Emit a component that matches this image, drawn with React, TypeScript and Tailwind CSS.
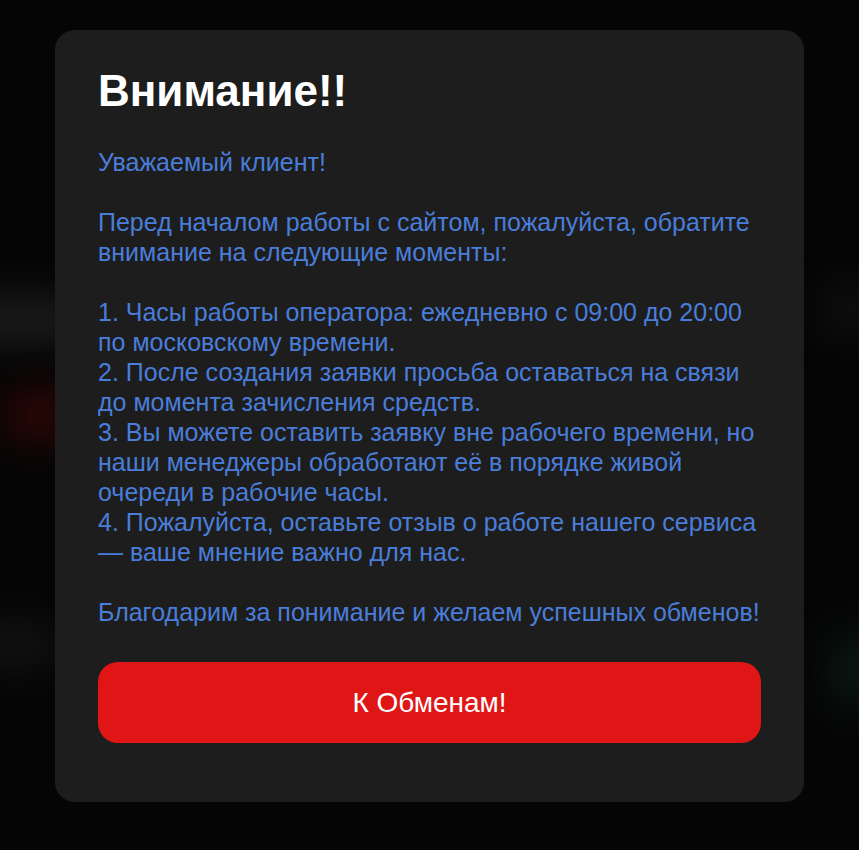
import React from "react";

// each entry is one paragraph; inner arrays are the lines as wrapped in the design
const items: string[][] = [
  ["1. Часы работы оператора: ежедневно с 09:00 до 20:00", "по московскому времени."],
  ["2. После создания заявки просьба оставаться на связи", "до момента зачисления средств."],
  [
    "3. Вы можете оставить заявку вне рабочего времени, но",
    "наши менеджеры обработают её в порядке живой",
    "очереди в рабочие часы.",
  ],
  ["4. Пожалуйста, оставьте отзыв о работе нашего сервиса", "— ваше мнение важно для нас."],
];

function Lines({ lines }: { lines: string[] }) {
  return (
    <p className="whitespace-nowrap">
      {lines.map((l, i) => (
        <React.Fragment key={i}>
          {i > 0 && <br />}
          {l}
        </React.Fragment>
      ))}
    </p>
  );
}

export default function App() {
  return (
    <div className="relative min-h-[850px] w-full overflow-hidden bg-[#050505] font-['Liberation_Sans',Arial,sans-serif]">
      {/* blurred page behind the modal */}
      <div className="pointer-events-none absolute inset-0">
        <div className="absolute left-[-40px] top-[295px] h-[50px] w-[120px] rounded-full bg-[#2a2a2a] opacity-60 blur-[18px]" />
        <div className="absolute left-[0px] top-[388px] h-[55px] w-[80px] rounded-full bg-[#3a0707] opacity-70 blur-[18px]" />
        <div className="absolute left-[-30px] top-[620px] h-[50px] w-[90px] rounded-full bg-[#1a1a1a] opacity-60 blur-[18px]" />
        <div className="absolute right-[-30px] top-[630px] h-[80px] w-[60px] rounded-full bg-[#0f2a22] opacity-50 blur-[20px]" />
        <div className="absolute right-[-20px] top-[280px] h-[60px] w-[60px] rounded-full bg-[#151515] opacity-60 blur-[18px]" />
      </div>

      <div className="relative flex justify-center pt-[30px]">
        <div className="w-[749px] rounded-[20px] bg-[#1d1d1d] px-[43px] pb-[59px] pt-[35px]">
          <h2 className="text-[44px] font-bold leading-[52px] text-white">Внимание!!</h2>

          <div className="mt-[30px] flex flex-col gap-[30px] text-[25px] leading-[30px] text-[#4a7dda]">
            <p>Уважаемый клиент!</p>
            <Lines lines={["Перед началом работы с сайтом, пожалуйста, обратите", "внимание на следующие моменты:"]} />
            <div>
              {items.map((lines, i) => (
                <Lines key={i} lines={lines} />
              ))}
            </div>
            <p className="whitespace-nowrap">Благодарим за понимание и желаем успешных обменов!</p>
          </div>

          <button
            type="button"
            className="mt-[35px] flex h-[81px] w-full items-center justify-center rounded-[20px] bg-[#e01616] text-[28px] text-white"
          >
            К Обменам!
          </button>
        </div>
      </div>
    </div>
  );
}
